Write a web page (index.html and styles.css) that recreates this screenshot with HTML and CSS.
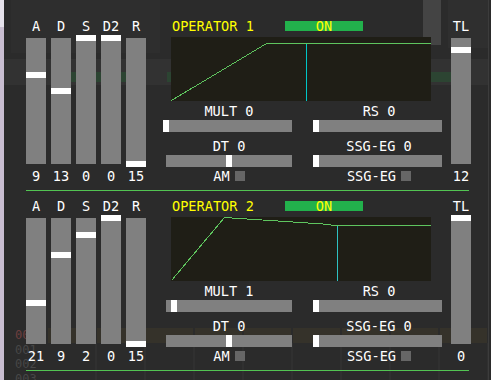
FILE: index.html
```html
<!DOCTYPE html>
<html lang="en">
<head>
  <meta charset="UTF-8" />
  <meta name="viewport" content="width=device-width, initial-scale=1" />
  <title>FM Operators</title>
  <link rel="stylesheet" href="styles.css">
</head>
<body>
  <div class="desk">
    <div class="edge"></div>

    <!-- the tracker behind the floating window -->
    <div class="backdrop">
      <div class="bd-top">
        <div class="bd-panel"></div>
        <div class="bd-knob"></div>
        <div class="bd-side"></div>
      </div>
      <div class="bd-band">
        <span class="bd-box b1"></span>
        <span class="bd-box b2"></span>
        <span class="bd-box b3"></span>
      </div>
      <div class="bd-fill"></div>
      <div class="bd-rows">
        <div class="bd-row cur"><span class="bd-num">000</span><span class="bd-cells"></span></div>
        <div class="bd-row"><span class="bd-num">001</span><span class="bd-lines"></span></div>
        <div class="bd-row"><span class="bd-num">002</span><span class="bd-lines"></span></div>
        <div class="bd-row"><span class="bd-num">003</span><span class="bd-lines"></span></div>
      </div>
    </div>

    <div class="window">

      <section class="op">
        <div class="op-row">
          <div class="env">
            <div class="vcol"><span class="vlabel">A</span><div class="vbar"><i class="vgrab" style="top:34px"></i></div><span class="vval">9</span></div>
            <div class="vcol"><span class="vlabel">D</span><div class="vbar"><i class="vgrab" style="top:50px"></i></div><span class="vval">13</span></div>
            <div class="vcol"><span class="vlabel">S</span><div class="vbar"><i class="vgrab" style="top:-3px"></i></div><span class="vval">0</span></div>
            <div class="vcol"><span class="vlabel">D2</span><div class="vbar"><i class="vgrab" style="top:-3px"></i></div><span class="vval">0</span></div>
            <div class="vcol"><span class="vlabel">R</span><div class="vbar"><i class="vgrab" style="top:123px"></i></div><span class="vval">15</span></div>
          </div>

          <div class="mid">
            <div class="op-head"><span class="op-name">OPERATOR 1</span><span class="op-on">ON</span></div>
            <svg class="graph" width="260" height="64" viewBox="0 0 260 64">
              <rect width="260" height="64" fill="#1f1e16" />
              <polyline points="0.5,63.5 95.5,6.5 260,6.5" fill="none" stroke="#5ec55e" stroke-width="1" />
              <line x1="135.5" y1="6.5" x2="135.5" y2="64" stroke="#00c6c6" stroke-width="1" />
            </svg>
            <div class="params">
              <div class="param"><span class="hlabel">MULT 0</span><div class="hbar"><i class="hgrab" style="left:-3px"></i></div></div>
              <div class="param"><span class="hlabel">RS 0</span><div class="hbar"><i class="hgrab" style="left:-3px"></i></div></div>
              <div class="param low"><span class="hlabel">DT 0</span><div class="hbar"><i class="hgrab" style="left:60px"></i></div></div>
              <div class="param low"><span class="hlabel">SSG-EG 0</span><div class="hbar"><i class="hgrab" style="left:-3px"></i></div></div>
              <div class="check"><span>AM</span><i class="box"></i></div>
              <div class="check"><span>SSG-EG</span><i class="box"></i></div>
            </div>
          </div>

          <div class="vcol"><span class="vlabel">TL</span><div class="vbar"><i class="vgrab" style="top:9px"></i></div><span class="vval">12</span></div>
        </div>
        <div class="sep"></div>
      </section>

      <section class="op">
        <div class="op-row">
          <div class="env">
            <div class="vcol"><span class="vlabel">A</span><div class="vbar"><i class="vgrab" style="top:82px"></i></div><span class="vval">21</span></div>
            <div class="vcol"><span class="vlabel">D</span><div class="vbar"><i class="vgrab" style="top:34px"></i></div><span class="vval">9</span></div>
            <div class="vcol"><span class="vlabel">S</span><div class="vbar"><i class="vgrab" style="top:14px"></i></div><span class="vval">2</span></div>
            <div class="vcol"><span class="vlabel">D2</span><div class="vbar"><i class="vgrab" style="top:-3px"></i></div><span class="vval">0</span></div>
            <div class="vcol"><span class="vlabel">R</span><div class="vbar"><i class="vgrab" style="top:123px"></i></div><span class="vval">15</span></div>
          </div>

          <div class="mid">
            <div class="op-head"><span class="op-name">OPERATOR 2</span><span class="op-on">ON</span></div>
            <svg class="graph" width="260" height="64" viewBox="0 0 260 64">
              <rect width="260" height="64" fill="#1f1e16" />
              <polyline points="0.5,63.5 53.5,0.5 159.5,7.5 160.5,8.5 260,8.5" fill="none" stroke="#5ec55e" stroke-width="1" />
              <line x1="166.5" y1="8.5" x2="166.5" y2="64" stroke="#2ec2c2" stroke-width="1" />
            </svg>
            <div class="params">
              <div class="param"><span class="hlabel">MULT 1</span><div class="hbar"><i class="hgrab" style="left:5px"></i></div></div>
              <div class="param"><span class="hlabel">RS 0</span><div class="hbar"><i class="hgrab" style="left:-3px"></i></div></div>
              <div class="param low"><span class="hlabel">DT 0</span><div class="hbar"><i class="hgrab" style="left:60px"></i></div></div>
              <div class="param low"><span class="hlabel">SSG-EG 0</span><div class="hbar"><i class="hgrab" style="left:-3px"></i></div></div>
              <div class="check"><span>AM</span><i class="box"></i></div>
              <div class="check"><span>SSG-EG</span><i class="box"></i></div>
            </div>
          </div>

          <div class="vcol"><span class="vlabel">TL</span><div class="vbar"><i class="vgrab" style="top:-3px"></i></div><span class="vval">0</span></div>
        </div>
        <div class="sep"></div>
      </section>

    </div>
  </div>
</body>
</html>
```

FILE: styles.css
```css
body {
  margin: 0;
  background: #2b2b2b;
  font-family: "DejaVu Sans Mono", "Liberation Mono", monospace;
  font-size: 13.6px;
  color: #ffffff;
  overflow: hidden;
}

.desk {
  position: relative;
  display: flex;
  width: 491px;
  height: 380px;
}

.edge {
  width: 4px;
  flex: none;
  background: linear-gradient(#e6e2ec 0 27px, #c9bed1 27px);
}

/* backdrop (tracker seen through the window) */
.backdrop {
  flex: 1;
  display: flex;
  flex-direction: column;
  border-right: 1px solid #3c3c3c;
  margin-right: 2px;
}

.bd-top {
  height: 59px;
  display: flex;
}

.bd-panel {
  margin-left: 7px;
  width: 149px;
  height: 53px;
  background: #2e2e2e;
}

.bd-knob {
  margin-left: 263px;
  width: 18px;
  height: 45px;
  background: #444444;
}

.bd-side {
  margin-left: 7px;
  width: 40px;
  height: 48px;
  background: #2f2f2f;
}

.bd-band {
  height: 26px;
  background: #323232;
  display: flex;
  align-items: flex-start;
  padding-top: 13px;
  box-sizing: border-box;
}

.bd-box {
  height: 10px;
  background: #2c4432;
}

.bd-box.b1 { margin-left: 67px; width: 55px; }
.bd-box.b2 { margin-left: 41px; width: 20px; }
.bd-box.b3 { margin-left: 237px; width: 40px; }

.bd-fill {
  flex: 1;
}

.bd-rows {
  height: 52px;
  font-size: 12px;
}

.bd-row {
  height: 14.5px;
  line-height: 14px;
  display: flex;
  color: #474747;
}

.bd-num {
  width: 44px;
  padding-left: 11px;
  box-sizing: border-box;
  flex: none;
}

.bd-row.cur .bd-num {
  color: #6e3f3f;
}

.bd-cells {
  flex: 1;
  background: repeating-linear-gradient(90deg, #35322a 0 47px, #2b2b2b 47px 49px);
}

.bd-lines {
  flex: 1;
  background: repeating-linear-gradient(90deg, #2b2b2b 0 47px, #303030 47px 49px);
}

/* floating window */
.window {
  position: absolute;
  top: 0;
  left: 5px;
  width: 483px;
  bottom: 0;
  padding: 11px 0 0 21px;
  box-sizing: border-box;
}

.op-row {
  display: flex;
  height: 179px;
}

.sep {
  width: 443px;
  height: 1px;
  background: #52c452;
}

.env {
  display: flex;
  gap: 5px;
}

.vcol {
  width: 20px;
  display: flex;
  flex-direction: column;
  align-items: center;
  padding-top: 7px;
}

.vlabel,
.vval {
  line-height: 16px;
  height: 16px;
  white-space: nowrap;
}

.vbar {
  position: relative;
  width: 20px;
  height: 126px;
  margin-top: 4px;
  background: #808080;
}

.vgrab {
  position: absolute;
  left: 0;
  width: 20px;
  height: 6px;
  background: #ffffff;
}

.vval {
  margin-top: 4px;
}

.mid {
  width: 276px;
  margin-left: 20px;
  margin-right: 9px;
}

.op-head {
  display: flex;
  margin-top: 7px;
  height: 16px;
  line-height: 16px;
  color: #ffff00;
}

.op-name {
  width: 113px;
  padding-left: 6px;
  white-space: nowrap;
}

.op-on {
  width: 78px;
  height: 10px;
  margin-top: 3px;
  line-height: 11px;
  text-align: center;
  background: #22b14c;
}

.graph {
  display: block;
  margin: 3px 0 0 5px;
  shape-rendering: crispEdges;
}

.params {
  display: grid;
  grid-template-columns: 126px 126px;
  column-gap: 24px;
  margin-top: 2px;
}

.param {
  display: flex;
  flex-direction: column;
  align-items: center;
}

.param.low {
  margin-top: 6px;
}

.hlabel {
  line-height: 16px;
  height: 16px;
  margin-bottom: 1px;
  white-space: nowrap;
}

.hbar {
  position: relative;
  width: 126px;
  height: 12px;
  background: #808080;
}

.hgrab {
  position: absolute;
  top: 0;
  width: 6px;
  height: 12px;
  background: #ffffff;
}

.check {
  display: flex;
  justify-content: center;
  gap: 5px;
  margin-top: 1px;
  line-height: 16px;
  height: 16px;
}

.check .box {
  width: 10px;
  height: 10px;
  margin-top: 3px;
  background: #666666;
}
```
